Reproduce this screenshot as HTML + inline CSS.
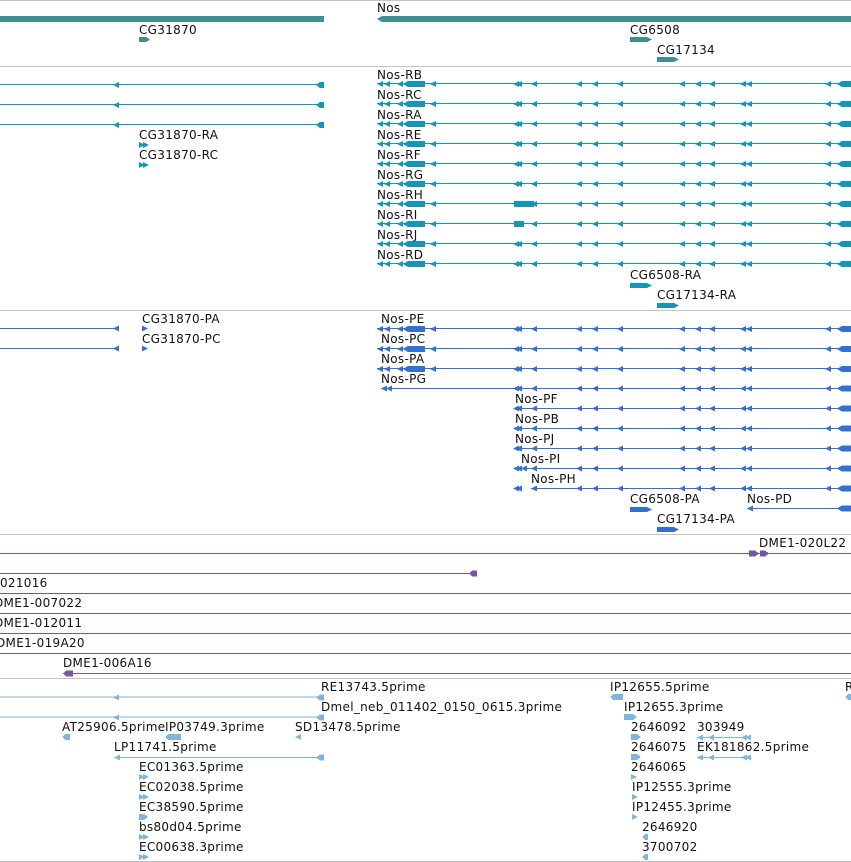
<!DOCTYPE html>
<html><head><meta charset="utf-8"><style>
html,body{margin:0;padding:0;background:#fff;width:851px;height:862px;overflow:hidden}
svg{display:block}
text{font-family:"DejaVu Sans","Liberation Sans",sans-serif;font-size:12px;fill:#111;letter-spacing:0.3px}
</style></head><body>
<svg width="851" height="862" viewBox="0 0 851 862" xmlns="http://www.w3.org/2000/svg" shape-rendering="crispEdges">
<defs>
 <path id="la" d="M0,0 L6,-3 L6,3 Z"/>
 <path id="ra" d="M6,0 L0,-3 L0,3 Z"/>
 <g id="nosR">
  <rect x="377" y="-1" width="474" height="1.2"/>
  <use href="#la" x="377"/><use href="#la" x="384"/><use href="#la" x="397"/>
  <path d="M403,0 L408,-3 L425,-3 L425,3 L408,3 Z"/>
  <use href="#la" x="430"/><use href="#la" x="513"/><use href="#la" x="516"/><use href="#la" x="531"/>
  <use href="#la" x="576"/><use href="#la" x="592"/><use href="#la" x="617"/>
  <use href="#la" x="679"/><use href="#la" x="695"/><use href="#la" x="709"/>
  <use href="#la" x="740"/><use href="#la" x="746"/><use href="#la" x="825"/>
  <path d="M837,0 L842,-3 L851,-3 L851,3 L842,3 Z"/>
 </g>
 <g id="nosS">
  <use href="#la" x="513"/><use href="#la" x="516"/><use href="#la" x="531"/>
  <use href="#la" x="576"/><use href="#la" x="592"/><use href="#la" x="617"/>
  <use href="#la" x="679"/><use href="#la" x="695"/><use href="#la" x="709"/>
  <use href="#la" x="740"/><use href="#la" x="746"/><use href="#la" x="825"/>
  <path d="M837,0 L842,-3 L851,-3 L851,3 L842,3 Z"/>
 </g>
 <g id="cgL">
  <rect x="0" y="-1" width="324" height="1.2"/>
  <use href="#la" x="113"/>
  <path d="M316,0 L320,-3 L324,-3 L324,3 L320,3 Z"/>
 </g>
</defs>
<g fill="#c4c4c4">
 <rect x="0" y="0" width="851" height="1"/>
 <rect x="0" y="66" width="851" height="1"/>
 <rect x="0" y="310" width="851" height="1"/>
 <rect x="0" y="534" width="851" height="1"/>
 <rect x="0" y="678" width="851" height="1"/>
 <rect x="0" y="861" width="851" height="1"/>
</g>

<g fill="#3f8e93">
 <rect x="0" y="16" width="324" height="6"/>
 <path d="M377,19 L382,16 L851,16 L851,22 L382,22 Z"/>
 <path d="M139,37 L146,37 L150,39.5 L146,42 L139,42 Z"/>
 <path d="M630,37 L647,37 L652,39.5 L647,42 L630,42 Z"/>
 <path d="M657,57 L674,57 L679,59.5 L674,62 L657,62 Z"/>
</g>
<text x="377" y="12">Nos</text>
<text x="139" y="34">CG31870</text>
<text x="630" y="34">CG6508</text>
<text x="657" y="54">CG17134</text>

<g fill="#1596b8">
 <use href="#cgL" y="85"/><use href="#cgL" y="105"/><use href="#cgL" y="125"/>
 <use href="#nosR" y="84"/><use href="#nosR" y="104"/><use href="#nosR" y="124"/>
 <use href="#nosR" y="144"/><use href="#nosR" y="164"/><use href="#nosR" y="184"/>
 <use href="#nosR" y="204"/><use href="#nosR" y="224"/><use href="#nosR" y="244"/><use href="#nosR" y="264"/>
 <rect x="514" y="201" width="20" height="6"/>
 <rect x="514" y="221" width="10" height="6"/>
 <use href="#ra" x="139" y="145"/><use href="#ra" x="143" y="145"/>
 <use href="#ra" x="139" y="165"/><use href="#ra" x="143" y="165"/>
 <path d="M630,283 L647,283 L652,285.5 L647,288 L630,288 Z"/>
 <path d="M657,303 L674,303 L679,305.5 L674,308 L657,308 Z"/>
</g>
<text x="377" y="79">Nos-RB</text>
<text x="377" y="99">Nos-RC</text>
<text x="377" y="119">Nos-RA</text>
<text x="377" y="139">Nos-RE</text>
<text x="377" y="159">Nos-RF</text>
<text x="377" y="179">Nos-RG</text>
<text x="377" y="199">Nos-RH</text>
<text x="377" y="219">Nos-RI</text>
<text x="377" y="239">Nos-RJ</text>
<text x="377" y="259">Nos-RD</text>
<text x="139" y="139">CG31870-RA</text>
<text x="139" y="159">CG31870-RC</text>
<text x="630" y="279">CG6508-RA</text>
<text x="657" y="299">CG17134-RA</text>

<g fill="#3470d0">
 <rect x="0" y="328" width="118" height="1.2"/><use href="#la" x="113" y="328.5"/>
 <rect x="0" y="348" width="118" height="1.2"/><use href="#la" x="113" y="348.5"/>
 <use href="#ra" x="142" y="328.5"/><use href="#ra" x="142" y="348.5"/>
 <use href="#nosR" y="329"/><use href="#nosR" y="349"/><use href="#nosR" y="369"/>
 <rect x="381" y="388" width="470" height="1.2"/><use href="#la" x="381" y="388.5"/><use href="#la" x="386" y="388.5"/><use href="#nosS" y="388.5"/>
 <rect x="515" y="408" width="336" height="1.2"/><use href="#nosS" y="408.5"/>
 <rect x="515" y="428" width="336" height="1.2"/><use href="#nosS" y="428.5"/>
 <rect x="515" y="448" width="336" height="1.2"/><use href="#nosS" y="448.5"/>
 <rect x="521" y="468" width="330" height="1.2"/><use href="#la" x="521" y="468.5"/><use href="#nosS" y="468.5"/>
 <rect x="531" y="488" width="320" height="1.2"/><use href="#la" x="531" y="488.5"/><use href="#nosS" y="488.5"/>
 <rect x="747" y="508" width="104" height="1.2"/><use href="#la" x="747" y="508.5"/>
 <path d="M837,508.5 L842,505.5 L851,505.5 L851,511.5 L842,511.5 Z"/>
 <path d="M630,507 L647,507 L652,509.5 L647,512 L630,512 Z"/>
 <path d="M657,527 L674,527 L679,529.5 L674,532 L657,532 Z"/>
</g>
<text x="142" y="323">CG31870-PA</text>
<text x="142" y="343">CG31870-PC</text>
<text x="381" y="323">Nos-PE</text>
<text x="381" y="343">Nos-PC</text>
<text x="381" y="363">Nos-PA</text>
<text x="381" y="383">Nos-PG</text>
<text x="515" y="403">Nos-PF</text>
<text x="515" y="423">Nos-PB</text>
<text x="515" y="443">Nos-PJ</text>
<text x="521" y="463">Nos-PI</text>
<text x="531" y="483">Nos-PH</text>
<text x="630" y="503">CG6508-PA</text>
<text x="747" y="503">Nos-PD</text>
<text x="657" y="523">CG17134-PA</text>

<g fill="#7357a6">
 <rect x="0" y="553" width="851" height="1"/>
 <rect x="0" y="573" width="476" height="1"/>
 <rect x="0" y="593" width="851" height="1"/>
 <rect x="0" y="613" width="851" height="1"/>
 <rect x="0" y="633" width="851" height="1"/>
 <rect x="0" y="653" width="851" height="1"/>
 <rect x="63" y="673" width="788" height="1"/>
 <path d="M749,550.5 L755,550.5 L759,553.5 L755,556.5 L749,556.5 Z"/>
 <path d="M760,550.5 L765,550.5 L769,553.5 L765,556.5 L760,556.5 Z"/>
 <path d="M469,573.5 L472,570.5 L477,570.5 L477,576.5 L472,576.5 Z"/>
 <path d="M63,673.5 L66,670.5 L73,670.5 L73,676.5 L66,676.5 Z"/>
</g>
<text x="759" y="547">DME1-020L22</text>
<text x="0" y="587">021016</text>
<text x="-6" y="607">DME1-007022</text>
<text x="-6" y="627">DME1-012011</text>
<text x="-4" y="647">DME1-019A20</text>
<text x="63" y="667">DME1-006A16</text>

<g fill="#80b5dd">
 <use href="#cgL" y="697.5"/><use href="#cgL" y="717.5"/>
 <rect x="114" y="757" width="210" height="1.2"/><use href="#la" x="114" y="757.5"/>
 <path d="M316,757.5 L320,754.5 L324,754.5 L324,760.5 L320,760.5 Z"/>
 <path d="M62,737 L65,734 L70,734 L70,740 L65,740 Z"/>
 <path d="M165,737 L168,734 L181,734 L181,740 L168,740 Z"/>
 <use href="#la" x="295" y="737"/>
 <use href="#ra" x="139" y="777"/><use href="#ra" x="143" y="777"/>
 <use href="#ra" x="139" y="797"/><use href="#ra" x="143" y="797"/>
 <path d="M139,814 L144,814 L148,817 L144,820 L139,820 Z"/>
 <use href="#ra" x="139" y="837"/><use href="#ra" x="143" y="837"/>
 <use href="#ra" x="139" y="857"/><use href="#ra" x="143" y="857"/>
 <path d="M610,697 L613,694 L623,694 L623,700 L613,700 Z"/>
 <path d="M845,697 L848,694 L851,694 L851,700 L848,700 Z"/>
 <path d="M624,714 L633,714 L637,717 L633,720 L624,720 Z"/>
 <path d="M631,734 L637,734 L641,737 L637,740 L631,740 Z"/>
 <path d="M631,754 L637,754 L641,757 L637,760 L631,760 Z"/>
 <use href="#ra" x="631" y="777"/>
 <use href="#ra" x="632" y="797"/>
 <use href="#ra" x="632" y="817"/>
 <path d="M642,837 L645,834 L648,834 L648,840 L645,840 Z"/>
 <path d="M642,857 L645,854 L648,854 L648,860 L645,860 Z"/>
 <rect x="697" y="737" width="54" height="1.2"/>
 <use href="#la" x="697" y="737.5"/><use href="#la" x="708" y="737.5"/><use href="#la" x="741" y="737.5"/><use href="#la" x="745" y="737.5"/>
 <rect x="697" y="757" width="54" height="1.2"/>
 <use href="#la" x="697" y="757.5"/><use href="#la" x="708" y="757.5"/><use href="#la" x="741" y="757.5"/><use href="#la" x="745" y="757.5"/>
</g>
<text x="321" y="691">RE13743.5prime</text>
<text x="321" y="711">Dmel_neb_011402_0150_0615.3prime</text>
<text x="62" y="731">AT25906.5prime</text>
<text x="165" y="731">IP03749.3prime</text>
<text x="295" y="731">SD13478.5prime</text>
<text x="114" y="751">LP11741.5prime</text>
<text x="139" y="771">EC01363.5prime</text>
<text x="139" y="791">EC02038.5prime</text>
<text x="139" y="811">EC38590.5prime</text>
<text x="139" y="831">bs80d04.5prime</text>
<text x="139" y="851">EC00638.3prime</text>
<text x="610" y="691">IP12655.5prime</text>
<text x="845" y="691">R</text>
<text x="624" y="711">IP12655.3prime</text>
<text x="631" y="731">2646092</text>
<text x="697" y="731">303949</text>
<text x="631" y="751">2646075</text>
<text x="697" y="751">EK181862.5prime</text>
<text x="631" y="771">2646065</text>
<text x="632" y="791">IP12555.3prime</text>
<text x="632" y="811">IP12455.3prime</text>
<text x="642" y="831">2646920</text>
<text x="642" y="851">3700702</text>
</svg>
</body></html>
